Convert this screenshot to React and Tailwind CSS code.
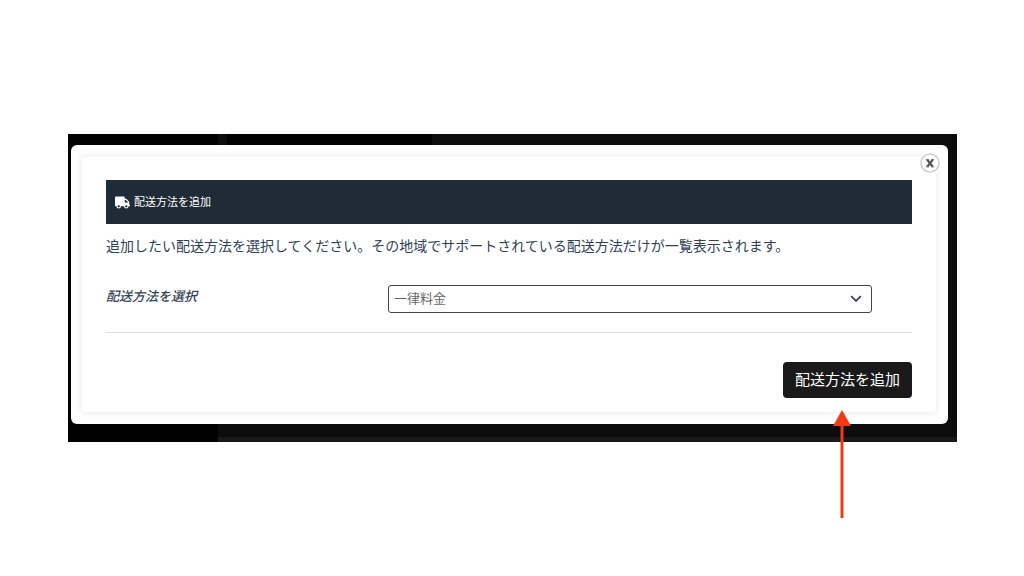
import { useState } from "react";
import { FaTruck } from "react-icons/fa";

const methods = [{ id: "flat_rate", label: "一律料金" }];

export default function App() {
  const [method, setMethod] = useState("flat_rate");

  return (
    <main className="flex min-h-screen items-center bg-white pr-[67px] pl-[68px] font-['Liberation_Sans','Noto_Sans_CJK_JP',sans-serif]">
      {/* BACKDROP */}
      <div className="relative w-full bg-[#0c0c0c] pt-[11px] pr-[9px] pb-[18px] pl-[3px]">
        <div className="absolute inset-y-0 left-0 w-[150px] bg-black" />
        <div className="absolute top-0 left-[159px] h-4 w-[205px] bg-black" />
        <div className="absolute right-0 bottom-0 left-[150px] h-[5px] bg-[#191919]" />

        {/* DIALOG */}
        <div
          role="dialog"
          aria-labelledby="dialog-title"
          className="relative rounded-md bg-white p-3 pl-[11px]"
        >
          <div className="rounded-sm bg-white px-6 pt-[23px] pb-[14px] shadow-[0_0_4px_3px_#f4f4f4]">
            {/* HEADER */}
            <div className="flex h-11 items-center gap-1 bg-[#1f2b36] pl-[9px] text-white">
              <FaTruck className="h-[13px] w-[15px]" />
              <h2 id="dialog-title" className="text-[11px] leading-4">
                配送方法を追加
              </h2>
            </div>

            <p className="mt-[10px] text-sm leading-6 text-[#2f3f56]">
              追加したい配送方法を選択してください。その地域でサポートされている配送方法だけが一覧表示されます。
            </p>

            {/* METHOD */}
            <div className="mt-[27px] flex items-start border-b border-[#dedede] pb-[19px]">
              <label
                htmlFor="method"
                className="w-[35%] pt-[2px] text-[13px] leading-5 font-medium text-[#2f3f56] italic"
              >
                配送方法を選択
              </label>
              <div className="relative w-[60%]">
                <select
                  id="method"
                  value={method}
                  onChange={(e) => setMethod(e.target.value)}
                  className="block h-7 w-full appearance-none rounded-[3px] border border-[#444] bg-white pl-[5px] text-[13px] text-[#666]"
                >
                  {methods.map((m) => (
                    <option key={m.id} value={m.id}>
                      {m.label}
                    </option>
                  ))}
                </select>
                <svg
                  viewBox="0 0 12 8"
                  className="pointer-events-none absolute top-[10px] right-[10px] h-2 w-3"
                  fill="none"
                  stroke="#3b4660"
                  strokeWidth="1.8"
                >
                  <path d="M1.2 1.2 6 6l4.800-4.800" />
                </svg>
              </div>
            </div>

            {/* ACTIONS */}
            <div className="relative mt-[29px] flex justify-end">
              <button
                type="button"
                className="h-9 rounded bg-[#1b1a1a] px-3 text-[15px] text-white"
              >
                配送方法を追加
              </button>

              {/* POINTER */}
              <svg
                viewBox="0 0 18 108"
                className="absolute top-[48px] right-[61px] h-[108px] w-[18px]"
                fill="#f23a16"
              >
                <path d="M9 0 18 16H10.500V108H7.500V16H0Z" />
              </svg>
            </div>
          </div>

          {/* CLOSE */}
          <button
            type="button"
            aria-label="閉じる"
            className="absolute top-[6px] right-[6px] flex size-6 items-center justify-center rounded-full bg-white"
          >
            <svg viewBox="0 0 20 20" className="size-5" fill="none">
              <circle cx="10" cy="10" r="9" stroke="#cfcfcf" strokeWidth="1.600" />
              <path
                d="M7.200 6.800 12.800 13.800M12.800 6.800 7.200 13.800"
                stroke="#555"
                strokeWidth="2.200"
              />
              <path
                d="M5.900 6.600h3M11.100 6.600h3M5.900 13.800h3M11.100 13.800h3"
                stroke="#666"
                strokeWidth=".9"
              />
            </svg>
          </button>
        </div>
      </div>
    </main>
  );
}
